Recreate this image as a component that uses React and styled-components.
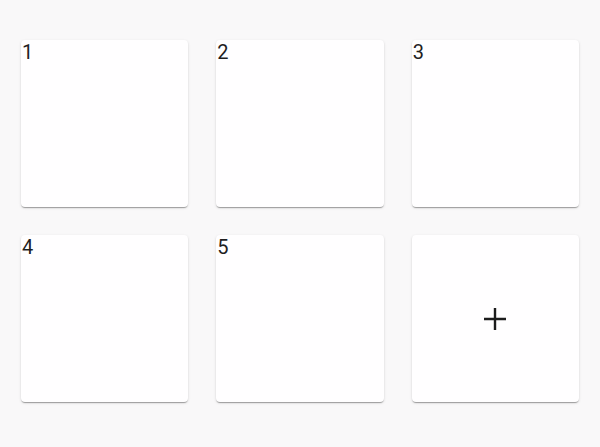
import React from "react";
import styled, { createGlobalStyle } from "styled-components";

const Global = createGlobalStyle`
  html, body { margin: 0; padding: 0; background: #f9f8f9; }
  body { font-family: Roboto, "Noto Sans", sans-serif; }
`;

const Grid = styled.div`
  display: grid;
  grid-template-columns: repeat(3, 1fr);
  grid-auto-rows: 167px;
  column-gap: 28px;
  row-gap: 28px;
  padding: 40px 21px;
`;

const Card = styled.div`
  background: #fffeff;
  border-radius: 4px;
  box-shadow: 0 2px 1px -1px rgba(0,0,0,0.2), 0 1px 1px 0 rgba(0,0,0,0.14), 0 1px 3px 0 rgba(0,0,0,0.12);
  display: flex;
  align-items: ${(p) => (p.$add ? "center" : "flex-start")};
  justify-content: ${(p) => (p.$add ? "center" : "flex-start")};
  cursor: ${(p) => (p.$add ? "pointer" : "default")};
`;

const Label = styled.span`
  font-size: 20px;
  color: #1f1f1f;
  line-height: normal;
  padding-left: 1px;
`;

const PlusIcon = () => (
  <svg width="22" height="22" viewBox="0 0 22 22">
    <path d="M11 0V22M0 11H22" stroke="#1c1c1c" strokeWidth="2.4" />
  </svg>
);

export default function App() {
  const items = [1, 2, 3, 4, 5];
  return (
    <>
      <Global />
      <Grid>
        {items.map((n) => (
          <Card key={n}>
            <Label>{n}</Label>
          </Card>
        ))}
        <Card $add>
          <PlusIcon />
        </Card>
      </Grid>
    </>
  );
}
